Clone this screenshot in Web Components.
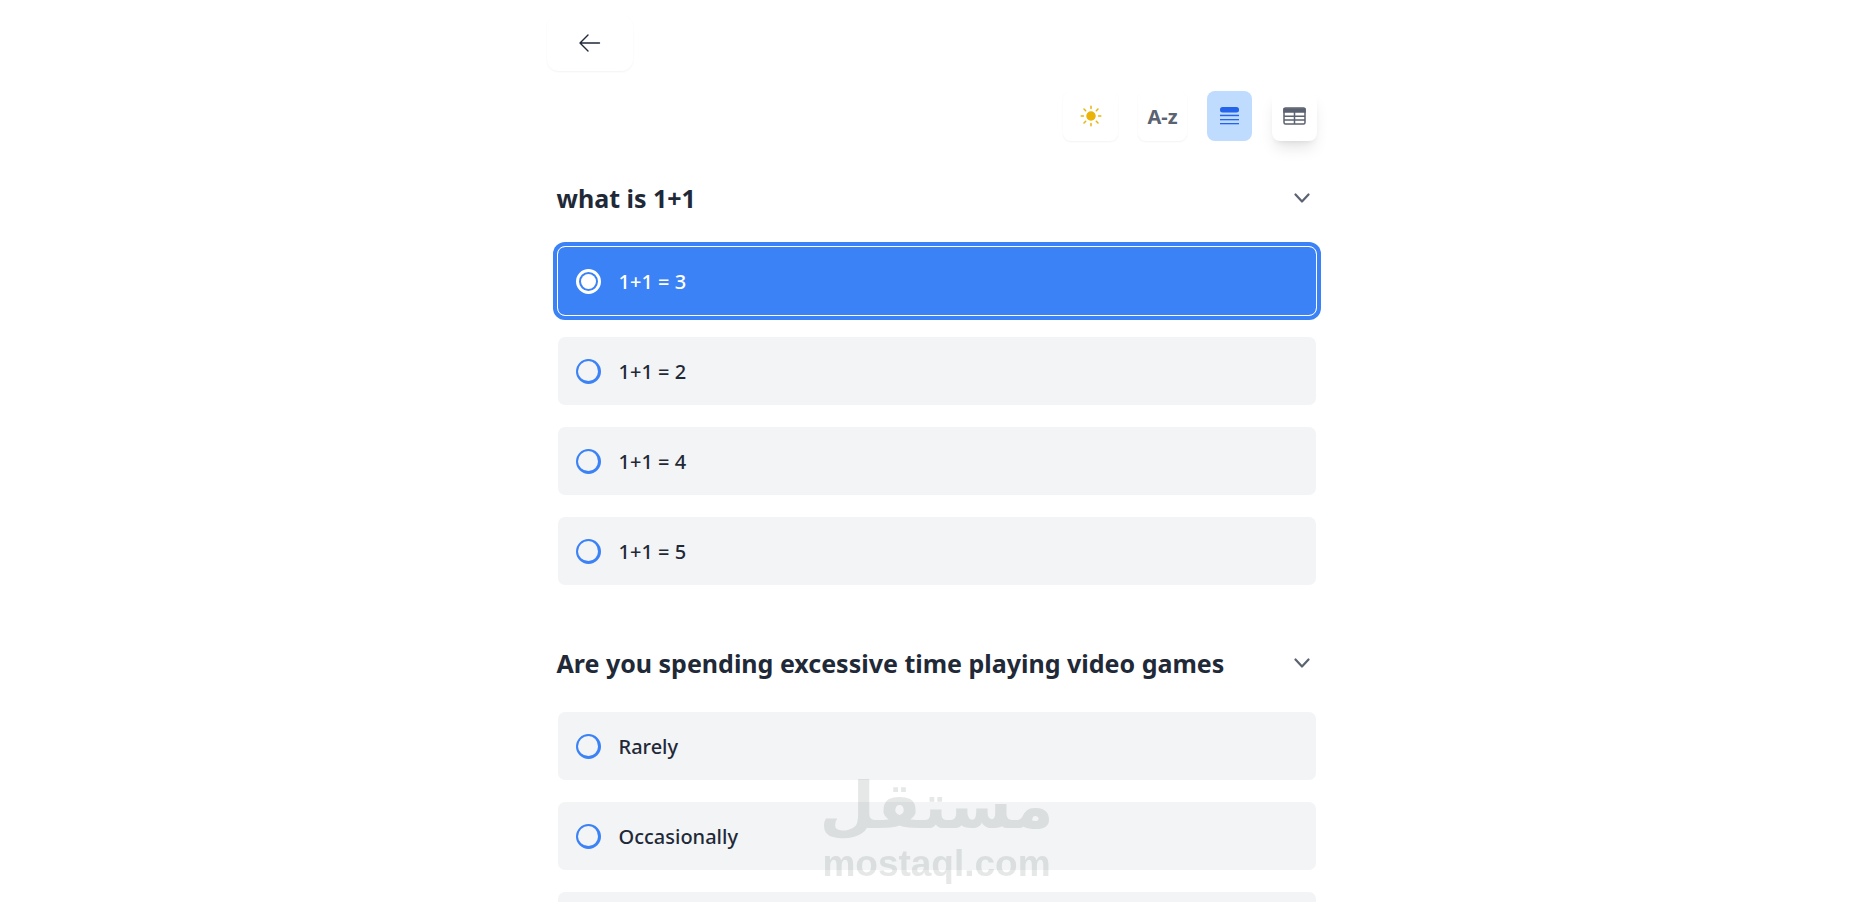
<!DOCTYPE html>
<html lang="en">
<head>
<meta charset="utf-8">
<title>Quiz</title>
<style>
    body{
        margin: 0;
        height: 100vh;
        overflow: hidden;
        background-color: #fff;
        color: #1f2937;
        font-family: "Noto Sans", "Liberation Sans", sans-serif;
    }
</style>
</head>
<body>
<quiz-page>
    <back-button slot="back"></back-button>
    <tool-button slot="tools" kind="sun" label="Light theme">
        <svg width="22" height="22" viewBox="0 0 22 22" fill="currentColor" stroke="currentColor" stroke-width="1.5" stroke-linecap="round"><circle cx="11" cy="11" r="4"/><path d="M11 1.200v2.300M11 18.500v2.300M1.200 11h2.300M18.500 11h2.300M4 4l1.700 1.700M16.300 16.300L18 18M4 18l1.700-1.700M16.300 5.700L18 4"/></svg>
    </tool-button>
    <tool-button slot="tools" kind="text">A-z</tool-button>
    <tool-button slot="tools" kind="active" label="List view">
        <svg width="19" height="18" viewBox="0 0 19 18" fill="currentColor"><rect width="19" height="5.500" rx="2.500"/><rect y="7.700" width="19" height="1.500"/><rect y="12" width="19" height="1.300"/><rect y="16" width="19" height="1.300"/></svg>
    </tool-button>
    <tool-button slot="tools" kind="raised" label="Table view">
        <svg width="23" height="18" viewBox="0 0 23 18" fill="none" stroke="currentColor" stroke-width="1.500"><rect x="1" y="1" width="21" height="16" rx="1.500"/><path fill="currentColor" d="M1 2h21v3H1z"/><path d="M1 9.200h21M1 13h21M11.500 5v12"/></svg>
    </tool-button>
    <quiz-question heading="what is 1+1">
        <quiz-option checked>1+1 = 3</quiz-option>
        <quiz-option>1+1 = 2</quiz-option>
        <quiz-option>1+1 = 4</quiz-option>
        <quiz-option>1+1 = 5</quiz-option>
    </quiz-question>
    <quiz-question heading="Are you spending excessive time playing video games">
        <quiz-option>Rarely</quiz-option>
        <quiz-option>Occasionally</quiz-option>
        <quiz-option></quiz-option>
    </quiz-question>
</quiz-page>
<site-mark></site-mark>

<script>
const pageTemplate = document.createElement('template');
pageTemplate.innerHTML = `
<style>
    :host{
        display: block;
        max-width: 760px;
        margin: 0 auto;
        padding: 15px 10px 0;
    }
    header{
        margin-left: -10px;
    }
    .tools{
        display: flex;
        justify-content: flex-end;
        gap: 20px;
        margin-top: 20px;
        margin-bottom: 37px;
    }
    main{
        display: flex;
        flex-direction: column;
        gap: 57px;
    }
</style>
<header><slot name="back"></slot></header>
<div class="tools"><slot name="tools"></slot></div>
<main><slot></slot></main>
`;

class QuizPage extends HTMLElement {
  constructor() {
    super();
    this.attachShadow({ mode: 'open' }).appendChild(pageTemplate.content.cloneNode(true));
  }
}

const backTemplate = document.createElement('template');
backTemplate.innerHTML = `
<style>
    :host{
        display: block;
    }
    button{
        display: flex;
        align-items: center;
        justify-content: center;
        width: 86px;
        height: 56px;
        border: 0;
        border-radius: 12px;
        background: none;
        color: #1f2937;
        box-shadow: 0 1px 2px rgba(0, 0, 0, 0.05);
        cursor: pointer;
    }
</style>
<button type="button" aria-label="Back">
    <svg width="22" height="18" viewBox="0 0 22 18" fill="none" stroke="currentColor" stroke-width="1.4" stroke-linecap="round" stroke-linejoin="round"><path d="M9 1L1 9l8 8M1 9H20.500"/></svg>
</button>
`;

class BackButton extends HTMLElement {
  constructor() {
    super();
    this.attachShadow({ mode: 'open' }).appendChild(backTemplate.content.cloneNode(true));
    this.shadowRoot.querySelector('button').addEventListener('click', () => history.back());
  }
}

const toolTemplate = document.createElement('template');
toolTemplate.innerHTML = `
<style>
    :host{
        display: block;
    }
    button{
        display: flex;
        align-items: center;
        justify-content: center;
        min-width: 45px;
        height: 50px;
        padding: 0 10px;
        border: 0;
        border-radius: 8px;
        background-color: #fff;
        color: #5b6270;
        font: bold 20px "Noto Sans", sans-serif;
        box-shadow: 0 1px 2px rgba(0, 0, 0, 0.05);
        cursor: pointer;
    }
    :host([kind="text"]) button{
        padding: 0 9px;
    }
    :host([kind="sun"]) button{
        min-width: 55px;
        color: #eab308;
    }
    :host([kind="active"]) button{
        background-color: #bfdbfe;
        color: #2563eb;
        box-shadow: none;
    }
    :host([kind="raised"]) button{
        box-shadow: 0 10px 15px -3px rgba(0, 0, 0, 0.1), 0 4px 6px -4px rgba(0, 0, 0, 0.1);
    }
</style>
<button type="button"><slot></slot></button>
`;

class ToolButton extends HTMLElement {
  constructor() {
    super();
    this.attachShadow({ mode: 'open' }).appendChild(toolTemplate.content.cloneNode(true));
  }

  connectedCallback() {
    if (this.hasAttribute('label')) {
      this.shadowRoot.querySelector('button').setAttribute('aria-label', this.getAttribute('label'));
    }
  }
}

const questionTemplate = document.createElement('template');
questionTemplate.innerHTML = `
<style>
    :host{
        display: block;
    }
    .top{
        display: flex;
        align-items: center;
        justify-content: space-between;
        margin-bottom: 28px;
    }
    h2{
        margin: 0;
        font-size: 25px;
        line-height: 40px;
    }
    .top button{
        display: flex;
        align-items: center;
        justify-content: center;
        width: 30px;
        height: 30px;
        padding: 0;
        border: 0;
        background: none;
        color: #5b6270;
        cursor: pointer;
    }
    .options{
        display: flex;
        flex-direction: column;
        gap: 20px;
    }
    .options[hidden]{
        display: none;
    }
</style>
<div class="top">
    <h2></h2>
    <button type="button" aria-label="Toggle answers" aria-expanded="true">
        <svg width="16" height="10" viewBox="0 0 16 10" fill="none" stroke="currentColor" stroke-width="2.2" stroke-linecap="round" stroke-linejoin="round"><path d="M1.500 1.500L8 8.500l6.500-7"/></svg>
    </button>
</div>
<div class="options" role="radiogroup"><slot></slot></div>
`;

class QuizQuestion extends HTMLElement {
  constructor() {
    super();
    this.attachShadow({ mode: 'open' }).appendChild(questionTemplate.content.cloneNode(true));
    const options = this.shadowRoot.querySelector('.options');
    const toggle = this.shadowRoot.querySelector('button');

    toggle.addEventListener('click', () => {
      options.hidden = !options.hidden;
      toggle.setAttribute('aria-expanded', String(!options.hidden));
    });

    // radios sit in separate shadow roots, so the group is kept here
    this.addEventListener('pick', (e) => {
      this.querySelectorAll('quiz-option').forEach((o) => o.toggleAttribute('checked', o === e.target));
    });
  }

  connectedCallback() {
    const heading = this.getAttribute('heading');
    this.shadowRoot.querySelector('h2').textContent = heading;
    this.shadowRoot.querySelector('.options').setAttribute('aria-label', heading);
  }
}

const optionTemplate = document.createElement('template');
optionTemplate.innerHTML = `
<style>
    :host{
        display: block;
    }
    label{
        display: flex;
        align-items: center;
        gap: 18px;
        box-sizing: border-box;
        height: 70px;
        padding: 0 18px;
        border: 1px solid transparent;
        border-radius: 8px;
        background-color: #f2f4f6;
        background-clip: padding-box;
        font-size: 20px;
        font-weight: 500;
        cursor: pointer;
    }
    input{
        appearance: none;
        box-sizing: border-box;
        width: 25px;
        height: 25px;
        margin: 0;
        border: solid #3b82f6;
        border-width: 2px 3px 3px 2px;
        border-radius: 50%;
        outline: none;
    }
    :host([checked]) label{
        border-color: #fff;
        background-color: #3b82f6;
        color: #fff;
        box-shadow: 0 0 0 4px #3b82f6;
    }
    :host([checked]) input{
        padding: 2px;
        border: 3px solid #fff;
        background-color: #fff;
        background-clip: content-box;
    }
</style>
<label><input type="radio"><span><slot></slot></span></label>
`;

class QuizOption extends HTMLElement {
  static get observedAttributes() {
    return ['checked'];
  }

  constructor() {
    super();
    this.attachShadow({ mode: 'open' }).appendChild(optionTemplate.content.cloneNode(true));
    this.input = this.shadowRoot.querySelector('input');
    this.input.addEventListener('change', () => {
      this.dispatchEvent(new CustomEvent('pick', { bubbles: true }));
    });
  }

  attributeChangedCallback() {
    this.input.checked = this.hasAttribute('checked');
  }
}

const markTemplate = document.createElement('template');
markTemplate.innerHTML = `
<style>
    :host{
        position: fixed;
        left: 0;
        right: 0;
        bottom: 18px;
        display: flex;
        flex-direction: column;
        align-items: center;
        color: #747c78;
        font-weight: bold;
        opacity: 0.18;
        pointer-events: none;
    }
    .ar{
        font-family: "DejaVu Sans", sans-serif;
        font-size: 64px;
        line-height: 76px;
    }
    .en{
        font-family: "Liberation Sans", Arial, sans-serif;
        font-size: 37px;
        line-height: 40px;
    }
</style>
<span class="ar" lang="ar" dir="rtl">مستقل</span>
<span class="en">mostaql.com</span>
`;

class SiteMark extends HTMLElement {
  constructor() {
    super();
    this.attachShadow({ mode: 'open' }).appendChild(markTemplate.content.cloneNode(true));
  }
}

customElements.define('quiz-page', QuizPage);
customElements.define('back-button', BackButton);
customElements.define('tool-button', ToolButton);
customElements.define('quiz-question', QuizQuestion);
customElements.define('quiz-option', QuizOption);
customElements.define('site-mark', SiteMark);
</script>
</body>
</html>
